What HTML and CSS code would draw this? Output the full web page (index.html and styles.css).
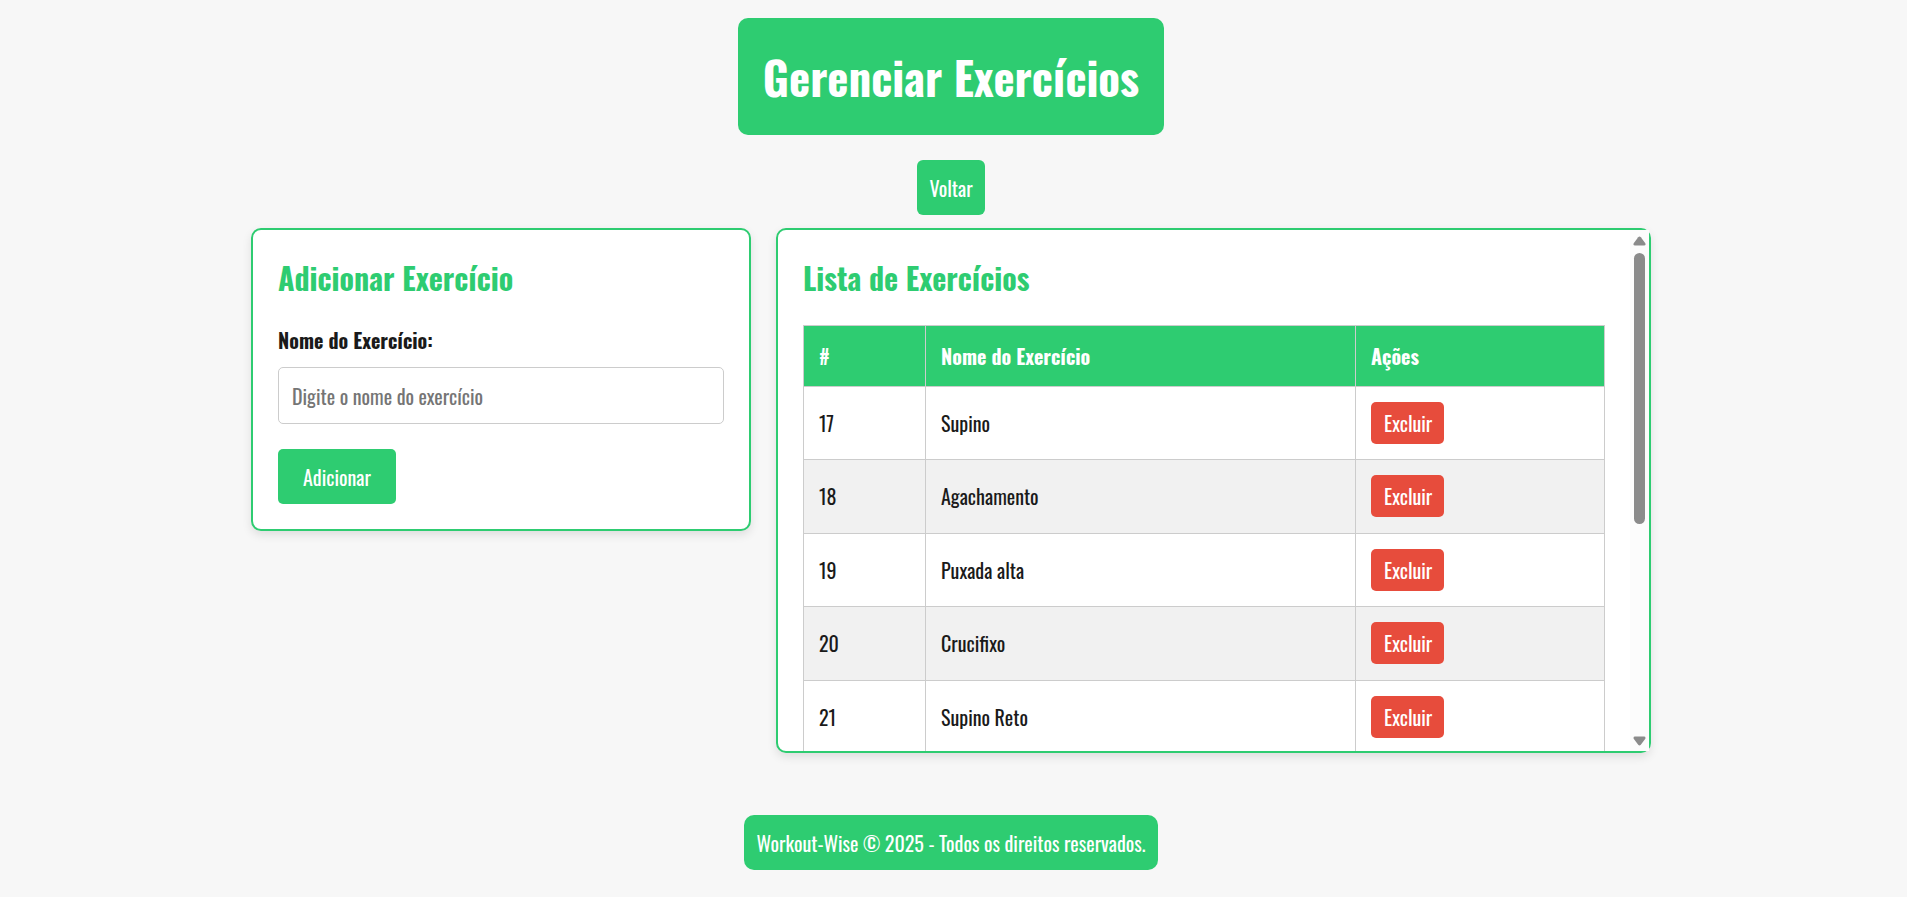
FILE: index.html
```html
<!DOCTYPE html>
<html lang="pt-BR">
<head>
<meta charset="utf-8">
<title>Gerenciar Exercícios</title>
<link rel="stylesheet" href="styles.css">
</head>
<body>
<header class="page-header">
  <h1 class="page-title">Gerenciar Exercícios</h1>
  <a class="back-link" href="#">Voltar</a>
</header>
<main class="columns">
  <section class="card form-card">
    <h2 class="card-title">Adicionar Exercício</h2>
    <form class="form">
      <label class="label" for="nome">Nome do Exercício:</label>
      <input class="input" id="nome" type="text" placeholder="Digite o nome do exercício">
      <button class="add-button" type="button">Adicionar</button>
    </form>
  </section>
  <section class="card list-card">
    <div class="list-scroll">
      <h2 class="card-title">Lista de Exercícios</h2>
      <table class="table">
        <thead>
          <tr><th class="col-id">#</th><th class="col-name">Nome do Exercício</th><th class="col-actions">Ações</th></tr>
        </thead>
        <tbody>
          <tr><td>17</td><td>Supino</td><td><button class="delete-button" type="button">Excluir</button></td></tr>
          <tr><td>18</td><td>Agachamento</td><td><button class="delete-button" type="button">Excluir</button></td></tr>
          <tr><td>19</td><td>Puxada alta</td><td><button class="delete-button" type="button">Excluir</button></td></tr>
          <tr><td>20</td><td>Crucifixo</td><td><button class="delete-button" type="button">Excluir</button></td></tr>
          <tr><td>21</td><td>Supino Reto</td><td><button class="delete-button" type="button">Excluir</button></td></tr>
        </tbody>
      </table>
    </div>
    <div class="rail" aria-hidden="true">
      <svg class="arrow" viewBox="0 0 13 10"><path d="M5.2 1.2Q6.5 -0.4 7.8 1.2L12.3 7.2Q13 9.5 11 9.5H2Q0 9.5 0.7 7.2Z"/></svg>
      <div class="track"><div class="thumb"></div></div>
      <svg class="arrow" viewBox="0 0 13 10"><path d="M5.2 8.8Q6.5 10.4 7.8 8.8L12.3 2.8Q13 0.5 11 0.5H2Q0 0.5 0.7 2.8Z"/></svg>
    </div>
  </section>
</main>
<footer class="footer">Workout-Wise © 2025 - Todos os direitos reservados.</footer>
</body>
</html>
```
FILE: styles.css
```css
* { box-sizing: border-box; }

body {
  margin: 0;
  padding: 18px 5px 27px 0;
  display: flex;
  flex-direction: column;
  align-items: center;
  background: #f7f7f7;
  color: #1a1a1a;
  font-family: Oswald, "Liberation Sans Narrow", "Open Sans", sans-serif;
  font-size: 20px;
  line-height: 30px;
}

.page-header {
  display: flex;
  flex-direction: column;
  align-items: center;
  gap: 25px;
}

.page-title {
  margin: 0;
  padding: 25px;
  border-radius: 10px;
  background: #2ecc71;
  color: #fff;
  font-size: 45px;
  line-height: 67px;
}

.back-link {
  padding: 13px 12px 12px;
  border-radius: 6px;
  background: #2ecc71;
  color: #fff;
  text-decoration: none;
}

.columns {
  width: 100%;
  max-width: 1400px;
  margin-top: 13px;
  display: grid;
  grid-template-columns: minmax(0, 4fr) minmax(0, 7fr);
  align-items: start;
  gap: 25px;
}

.card {
  border: 2px solid #2ecc71;
  border-radius: 10px;
  background: #fff;
  box-shadow: 0 4px 10px rgba(0, 0, 0, 0.1);
}

.form-card { padding: 25px; }

.card-title {
  margin: 0 0 24px;
  color: #2ecc71;
  font-size: 30px;
  line-height: 46px;
}

.form {
  display: flex;
  flex-direction: column;
  align-items: flex-start;
}

.label {
  margin-bottom: 12px;
  font-weight: 700;
}

.input {
  width: 100%;
  height: 57px;
  margin-bottom: 25px;
  padding: 0 13px;
  border: 1px solid #ccc;
  border-radius: 5px;
  background: #fff;
  color: inherit;
  font: inherit;
}

.input::placeholder { color: #757575; }

.add-button {
  padding: 13px 25px 12px;
  border: 0;
  border-radius: 5px;
  background: #2ecc71;
  color: #fff;
  font: inherit;
}

.list-card {
  display: flex;
  height: 525px;
}

.list-scroll {
  flex: 1;
  min-width: 0;
  padding: 25px 25px 0;
  overflow: hidden;
}

.table {
  width: 100%;
  border-collapse: collapse;
  table-layout: fixed;
}

.table th,
.table td {
  height: 73px;
  padding: 15px;
  border: 1px solid #ccc;
  text-align: left;
}

.table th {
  height: 61px;
  background: #2ecc71;
  color: #fff;
}

.table tbody tr:nth-child(even) td {
  height: 74px;
  padding-bottom: 16px;
  background: #f1f1f1;
}

.col-id { width: 122px; }
.col-actions { width: 249px; }

.delete-button {
  display: block;
  padding: 6px 12px 6px 13px;
  border: 0;
  border-radius: 5px;
  background: #e74c3c;
  color: #fff;
  font: inherit;
}

.rail {
  width: 19px;
  padding: 6px 0 5px;
  display: flex;
  flex-direction: column;
  align-items: center;
  gap: 7px;
  background: #fcfcfc;
}

.arrow {
  width: 13px;
  height: 10px;
  fill: #8b8b8b;
}

.track { flex: 1; }

.thumb {
  width: 11px;
  height: 57%;
  border-radius: 6px;
  background: #8b8b8b;
}

.footer {
  margin-top: 62px;
  padding: 13px 13px 12px;
  border-radius: 10px;
  background: #2ecc71;
  color: #fff;
}
```
